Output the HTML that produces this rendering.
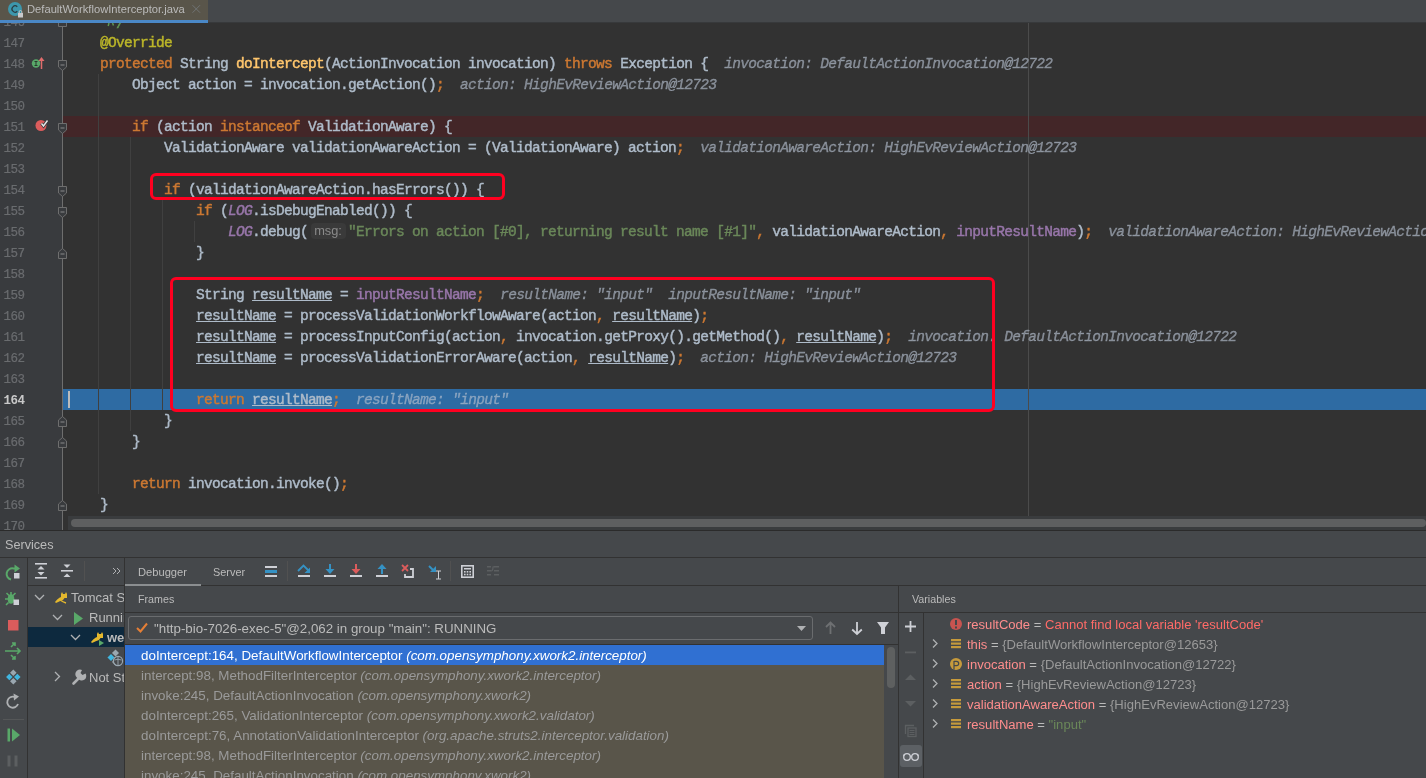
<!DOCTYPE html>
<html><head><meta charset="utf-8"><style>
*{margin:0;padding:0;box-sizing:border-box}
html,body{width:1426px;height:778px;overflow:hidden;background:#45484B;font-family:"Liberation Sans",sans-serif}
#root{position:absolute;left:0;top:0;width:1426px;height:778px;will-change:transform;overflow:hidden}
.abs{position:absolute}
#tabbar{position:absolute;left:0;top:0;width:1426px;height:23px;background:#45484B}
#tab{position:absolute;left:0;top:0;width:208px;height:20px;background:#59554A}
#tabline{position:absolute;left:0;top:20px;width:208px;height:3px;background:#4A88C7}
#editor{position:absolute;left:0;top:23px;width:1426px;height:507px;background:#323232;overflow:hidden}
#gutter{position:absolute;left:0;top:0;width:63px;height:507px;background:#393B3E}
.cl{position:absolute;left:68px;height:21px;line-height:21px;margin-top:0.6px;white-space:pre;font-family:"Liberation Mono",monospace;font-size:14.5px;letter-spacing:-0.7px;-webkit-text-stroke:0.45px;color:#AEBBC9;will-change:transform}
.ln{position:absolute;left:0;width:24.5px;text-align:right;height:21px;line-height:21px;margin-top:1.5px;font-family:"Liberation Mono",monospace;font-size:12.5px;letter-spacing:-0.5px;-webkit-text-stroke:0.2px;color:#6A6C6F;will-change:transform}
.k{color:#CC7832}.a{color:#BBB529}.m{color:#FFC66D}.s{color:#6A8759}.f{color:#9876AA}.fi{color:#9876AA;font-style:italic}
.u{text-decoration:underline;text-underline-offset:1px;text-decoration-thickness:1px}.c{color:#629755}.h{color:rgba(180,190,205,0.6);font-style:italic;-webkit-text-stroke:0.35px rgba(180,190,205,0.6)}
.ph{display:inline-block;width:35px;height:16px;line-height:16px;vertical-align:1px;margin:0 2.5px;font-family:"Liberation Sans",sans-serif;font-size:12.8px;letter-spacing:0;-webkit-text-stroke:0;color:#8A8A8A;background:#3A3A3A;border-radius:4px;text-align:center}
.ui{font-family:"Liberation Sans",sans-serif;white-space:nowrap}
.fr{position:absolute;left:16px;height:20px;line-height:20px;font-size:13.38px;color:#9A9A9A;white-space:nowrap}
.fr i{font-style:italic}
.vr{position:absolute;left:967px;height:20px;line-height:20px;margin-top:1px;font-size:13.05px;color:#BBBBBB;white-space:nowrap}
.vn{color:#FF8D8D}.vv{color:#9A9A9A}
#services{position:absolute;left:0;top:530px;width:1426px;height:248px;background:#45484B}
</style></head><body><div id="root">
<div id="editor"><div id="gutter"></div>
<div class="abs" style="left:63px;top:93px;width:1363px;height:21px;background:#432628"></div>
<div class="abs" style="left:63px;top:366px;width:1363px;height:21px;background:#2E6BA3"></div>
<div class="abs" style="left:1028px;top:0;width:1px;height:507px;background:#4B4B4B"></div>
<div class="abs" style="left:98px;top:51px;width:1px;height:420px;background:#404040"></div>
<div class="abs" style="left:130px;top:114px;width:1px;height:294px;background:#404040"></div>
<div class="abs" style="left:162px;top:177px;width:1px;height:210px;background:#404040"></div>
<div class="abs" style="left:194px;top:198px;width:1px;height:21px;background:#404040"></div>
<div class="abs" style="left:68px;top:368px;width:2px;height:17px;background:#BBBBBB"></div>
<div class="cl" style="top:-12px;margin-top:3px"><span class="d">     </span><span class="c">*/</span></div>
<div class="ln" style="top:-12px">146</div>
<div class="cl" style="top:9px"><span class="d">    </span><span class="a">@Override</span></div>
<div class="ln" style="top:9px">147</div>
<div class="cl" style="top:30px"><span class="d">    </span><span class="k">protected</span><span class="d"> String </span><span class="m">doIntercept</span><span class="d">(ActionInvocation invocation) </span><span class="k">throws</span><span class="d"> Exception {  </span><span class="h">invocation: DefaultActionInvocation@12722</span></div>
<div class="ln" style="top:30px">148</div>
<div class="cl" style="top:51px"><span class="d">        Object action = invocation.getAction()</span><span class="k">;</span><span class="d">  </span><span class="h">action: HighEvReviewAction@12723</span></div>
<div class="ln" style="top:51px">149</div>
<div class="cl" style="top:72px"></div>
<div class="ln" style="top:72px">150</div>
<div class="cl" style="top:93px"><span class="d">        </span><span class="k">if</span><span class="d"> (action </span><span class="k">instanceof</span><span class="d"> ValidationAware) {</span></div>
<div class="ln" style="top:93px">151</div>
<div class="cl" style="top:114px"><span class="d">            ValidationAware validationAwareAction = (ValidationAware) action</span><span class="k">;</span><span class="d">  </span><span class="h">validationAwareAction: HighEvReviewAction@12723</span></div>
<div class="ln" style="top:114px">152</div>
<div class="cl" style="top:135px"></div>
<div class="ln" style="top:135px">153</div>
<div class="cl" style="top:156px"><span class="d">            </span><span class="k">if</span><span class="d"> (validationAwareAction.hasErrors()) {</span></div>
<div class="ln" style="top:156px">154</div>
<div class="cl" style="top:177px"><span class="d">                </span><span class="k">if</span><span class="d"> (</span><span class="fi">LOG</span><span class="d">.isDebugEnabled()) {</span></div>
<div class="ln" style="top:177px">155</div>
<div class="cl" style="top:198px"><span class="d">                    </span><span class="fi">LOG</span><span class="d">.debug(</span><span class="ph">msg:</span><span class="s">&quot;Errors on action [#0], returning result name [#1]&quot;</span><span class="k">,</span><span class="d"> validationAwareAction</span><span class="k">,</span><span class="d"> </span><span class="f">inputResultName</span><span class="d">)</span><span class="k">;</span><span class="d">  </span><span class="h">validationAwareAction: HighEvReviewAction@12723</span></div>
<div class="ln" style="top:198px">156</div>
<div class="cl" style="top:219px"><span class="d">                }</span></div>
<div class="ln" style="top:219px">157</div>
<div class="cl" style="top:240px"></div>
<div class="ln" style="top:240px">158</div>
<div class="cl" style="top:261px"><span class="d">                String </span><span class="u">resultName</span><span class="d"> = </span><span class="f">inputResultName</span><span class="k">;</span><span class="d">  </span><span class="h">resultName: &quot;input&quot;  inputResultName: &quot;input&quot;</span></div>
<div class="ln" style="top:261px">159</div>
<div class="cl" style="top:282px"><span class="d">                </span><span class="u">resultName</span><span class="d"> = processValidationWorkflowAware(action</span><span class="k">,</span><span class="d"> </span><span class="u">resultName</span><span class="d">)</span><span class="k">;</span></div>
<div class="ln" style="top:282px">160</div>
<div class="cl" style="top:303px"><span class="d">                </span><span class="u">resultName</span><span class="d"> = processInputConfig(action</span><span class="k">,</span><span class="d"> invocation.getProxy().getMethod()</span><span class="k">,</span><span class="d"> </span><span class="u">resultName</span><span class="d">)</span><span class="k">;</span><span class="d">  </span><span class="h">invocation: DefaultActionInvocation@12722</span></div>
<div class="ln" style="top:303px">161</div>
<div class="cl" style="top:324px"><span class="d">                </span><span class="u">resultName</span><span class="d"> = processValidationErrorAware(action</span><span class="k">,</span><span class="d"> </span><span class="u">resultName</span><span class="d">)</span><span class="k">;</span><span class="d">  </span><span class="h">action: HighEvReviewAction@12723</span></div>
<div class="ln" style="top:324px">162</div>
<div class="cl" style="top:345px"></div>
<div class="ln" style="top:345px">163</div>
<div class="cl" style="top:366px"><span class="d">                </span><span class="k">return</span><span class="d"> </span><span class="u">resultName</span><span class="k">;</span><span class="d">  </span><span class="h">resultName: &quot;input&quot;</span></div>
<div class="ln" style="top:366px;color:#C8C8C8;font-weight:bold;-webkit-text-stroke:0">164</div>
<div class="cl" style="top:387px"><span class="d">            }</span></div>
<div class="ln" style="top:387px">165</div>
<div class="cl" style="top:408px"><span class="d">        }</span></div>
<div class="ln" style="top:408px">166</div>
<div class="cl" style="top:429px"></div>
<div class="ln" style="top:429px">167</div>
<div class="cl" style="top:450px"><span class="d">        </span><span class="k">return</span><span class="d"> invocation.invoke()</span><span class="k">;</span></div>
<div class="ln" style="top:450px">168</div>
<div class="cl" style="top:471px"><span class="d">    }</span></div>
<div class="ln" style="top:471px">169</div>
<div class="cl" style="top:492px"></div>
<div class="ln" style="top:492px">170</div>
<svg class="abs" style="left:107px;top:0" width="8" height="6" viewBox="0 0 8 6"><path d="M2 0 L1.2 3 M5.5 0 L6.5 2.5" stroke="#629755" stroke-width="1.5"/></svg>
<div class="abs" style="left:62px;top:0;width:1px;height:507px;background:#6E6E6E"></div>
<svg class="abs" style="left:58px;top:37.0px" width="10" height="12" viewBox="0 0 10 12"><path d="M0.5 0.5 H8.5 V7 L4.5 10.5 L0.5 7 Z" fill="#393B3E" stroke="#6E6E6E" stroke-width="1"/><rect x="2.5" y="4.5" width="4" height="1" fill="#8A8A8A"/></svg>
<svg class="abs" style="left:58px;top:100.0px" width="10" height="12" viewBox="0 0 10 12"><path d="M0.5 0.5 H8.5 V7 L4.5 10.5 L0.5 7 Z" fill="#393B3E" stroke="#6E6E6E" stroke-width="1"/><rect x="2.5" y="4.5" width="4" height="1" fill="#8A8A8A"/></svg>
<svg class="abs" style="left:58px;top:163.0px" width="10" height="12" viewBox="0 0 10 12"><path d="M0.5 0.5 H8.5 V7 L4.5 10.5 L0.5 7 Z" fill="#393B3E" stroke="#6E6E6E" stroke-width="1"/><rect x="2.5" y="4.5" width="4" height="1" fill="#8A8A8A"/></svg>
<svg class="abs" style="left:58px;top:184.0px" width="10" height="12" viewBox="0 0 10 12"><path d="M0.5 0.5 H8.5 V7 L4.5 10.5 L0.5 7 Z" fill="#393B3E" stroke="#6E6E6E" stroke-width="1"/><rect x="2.5" y="4.5" width="4" height="1" fill="#8A8A8A"/></svg>
<svg class="abs" style="left:58px;top:-7.5px" width="10" height="12" viewBox="0 0 10 12"><path d="M0.5 10.5 H8.5 V4 L4.5 0.5 L0.5 4 Z" fill="#393B3E" stroke="#6E6E6E" stroke-width="1"/><rect x="2.5" y="5.5" width="4" height="1" fill="#8A8A8A"/></svg>
<svg class="abs" style="left:58px;top:224.5px" width="10" height="12" viewBox="0 0 10 12"><path d="M0.5 10.5 H8.5 V4 L4.5 0.5 L0.5 4 Z" fill="#393B3E" stroke="#6E6E6E" stroke-width="1"/><rect x="2.5" y="5.5" width="4" height="1" fill="#8A8A8A"/></svg>
<svg class="abs" style="left:58px;top:392.5px" width="10" height="12" viewBox="0 0 10 12"><path d="M0.5 10.5 H8.5 V4 L4.5 0.5 L0.5 4 Z" fill="#393B3E" stroke="#6E6E6E" stroke-width="1"/><rect x="2.5" y="5.5" width="4" height="1" fill="#8A8A8A"/></svg>
<svg class="abs" style="left:58px;top:413.5px" width="10" height="12" viewBox="0 0 10 12"><path d="M0.5 10.5 H8.5 V4 L4.5 0.5 L0.5 4 Z" fill="#393B3E" stroke="#6E6E6E" stroke-width="1"/><rect x="2.5" y="5.5" width="4" height="1" fill="#8A8A8A"/></svg>
<svg class="abs" style="left:58px;top:476.5px" width="10" height="12" viewBox="0 0 10 12"><path d="M0.5 10.5 H8.5 V4 L4.5 0.5 L0.5 4 Z" fill="#393B3E" stroke="#6E6E6E" stroke-width="1"/><rect x="2.5" y="5.5" width="4" height="1" fill="#8A8A8A"/></svg>
<svg class="abs" style="left:30px;top:32px" width="16" height="16" viewBox="0 0 16 16"><circle cx="6" cy="8.5" r="4.2" fill="#59A869"/><path d="M4.5 6.5 H7.5 M6 6.5 V10.5 M4.5 10.5 H7.5" stroke="#2B3A2E" stroke-width="1"/><path d="M11.5 14 V4" stroke="#E06C6C" stroke-width="1.5"/><path d="M8.5 6 L11.5 2 L14.5 6 Z" fill="#E06C6C"/></svg>
<svg class="abs" style="left:33px;top:93px" width="16" height="16" viewBox="0 0 16 16"><circle cx="8" cy="9.5" r="5.5" fill="#DB5C5C"/><path d="M8.5 7.5 L10.5 10 L14.5 4.5" fill="none" stroke="#393B3E" stroke-width="3"/><path d="M8.5 7.5 L10.5 10 L14.5 4.5" fill="none" stroke="#E8E8E8" stroke-width="1.4"/></svg>
<div class="abs" style="left:68px;top:493px;width:1358px;height:14px;background:#3A3C3E"></div>
<div class="abs" style="left:71px;top:496px;width:1355px;height:8px;border-radius:4px;background:#5E5F60"></div>
</div>
<div id="tabbar"><div id="tab"></div><div id="tabline"></div>
<div class="abs ui" style="left:27px;top:3px;font-size:11.2px;color:#BBBBBB">DefaultWorkflowInterceptor.java</div>
<svg class="abs" style="left:6px;top:1px" width="20" height="19" viewBox="0 0 20 19"><circle cx="9" cy="8" r="7" fill="#3D97AC"/><path d="M11.3 5.8 A3.1 3.1 0 1 0 11.3 10.2" fill="none" stroke="#2A3A40" stroke-width="1.2"/><rect x="12" y="12" width="5" height="4.5" fill="#C8C9CB"/><path d="M13.2 12 V10.8 A1.3 1.3 0 0 1 15.8 10.8 V12" fill="none" stroke="#C8C9CB" stroke-width="1"/></svg>
<svg class="abs" style="left:191px;top:4px" width="11" height="11" viewBox="0 0 11 11"><path d="M1.5 1.2 L9 8.7 M9 1.2 L1.5 8.7" stroke="#727678" stroke-width="0.9"/></svg>
<div class="abs" style="left:208px;top:22px;width:1218px;height:1px;background:#37393B"></div>
</div>
<div id="services">
<!-- borders -->
<div class="abs" style="left:0;top:0;width:1426px;height:1px;background:#2B2B2B"></div>
<div class="abs" style="left:0;top:27px;width:1426px;height:1px;background:#323232"></div>
<div class="abs" style="left:27px;top:28px;width:1px;height:220px;background:#323232"></div>
<div class="abs" style="left:28px;top:55px;width:96px;height:1px;background:#323232"></div>
<div class="abs" style="left:124px;top:28px;width:1px;height:220px;background:#323232"></div>
<div class="abs" style="left:125px;top:55px;width:1301px;height:1px;background:#323232"></div>
<div class="abs" style="left:125px;top:82px;width:1301px;height:1px;background:#323232"></div>
<div class="abs" style="left:898px;top:56px;width:1px;height:192px;background:#323232"></div>
<div class="abs" style="left:923px;top:83px;width:1px;height:165px;background:#323232"></div>
<div class="abs" style="left:125px;top:114px;width:773px;height:1px;background:#323232"></div>

<div class="abs ui" style="left:5px;top:7.5px;font-size:12.65px;color:#BBBBBB">Services</div>

<!-- left toolbar icons -->
<svg class="abs" style="left:0;top:28px" width="27" height="220" viewBox="0 0 27 220">
  <!-- restart: center 13,15 -->
  <path d="M11 21.5 A5.5 5.5 0 1 1 13.5 10.5 L15 10.5" fill="none" stroke="#59A869" stroke-width="2"/>
  <path d="M14.5 6.5 L20 10.5 L14.5 14.5 Z" fill="#59A869"/>
  <rect x="14" y="15" width="5.5" height="5.5" fill="#CED0D6"/>
  <!-- debug bug: center 41 -->
  <g>
   <ellipse cx="11" cy="41" rx="3.3" ry="4.8" fill="#59A869"/>
   <path d="M6.5 35 L9 37.5 M15.5 35 L13 37.5 M5 41 L8 41 M6 47 L8.5 44.5 M11 34 L11 37" stroke="#59A869" stroke-width="1.6"/>
   <rect x="13.5" y="41.5" width="5.5" height="5.5" fill="#CED0D6"/>
  </g>
  <!-- stop: 62-72 -->
  <rect x="8" y="62" width="10.5" height="10.5" fill="#DB5C5C"/>
  <!-- green arrows: center 92.5 -->
  <g fill="none" stroke="#59A869" stroke-width="1.6">
   <path d="M5 93 L20 93 M17 90 L20 93 L17 96"/>
   <path d="M11 89 L15 85 M12 85 L15 85 L15 88"/>
   <path d="M11 97 L15 101 M12 101 L15 101 L15 98"/>
  </g>
  <!-- diamonds: center 119 -->
  <g>
   <rect x="11" y="112.5" width="4.6" height="4.6" fill="#9AA7B0" transform="rotate(45 13.3 114.8)"/>
   <rect x="7" y="116.7" width="4.6" height="4.6" fill="#40B6E0" transform="rotate(45 9.3 119)"/>
   <rect x="15" y="116.7" width="4.6" height="4.6" fill="#40B6E0" transform="rotate(45 17.3 119)"/>
   <rect x="11" y="120.9" width="4.6" height="4.6" fill="#9AA7B0" transform="rotate(45 13.3 123.2)"/>
  </g>
  <!-- refresh: center 144 -->
  <path d="M18 146 A5.5 5.5 0 1 1 14.5 139" fill="none" stroke="#AFB1B3" stroke-width="1.8"/>
  <path d="M13.5 135.5 L19 138.5 L14 142.5 Z" fill="#AFB1B3"/>
  <!-- separator 161 -->
  <rect x="3" y="161" width="21" height="1" fill="#555758"/>
  <!-- resume center 177 -->
  <rect x="7.5" y="170.5" width="2.5" height="13" fill="#59A869"/>
  <path d="M12 170.5 L20 177 L12 183.5 Z" fill="#59A869"/>
  <!-- pause center 203 -->
  <rect x="7.5" y="197.5" width="3" height="11" fill="#5C5F61"/>
  <rect x="14.5" y="197.5" width="3" height="11" fill="#5C5F61"/>
</svg>

<!-- tree toolbar -->
<svg class="abs" style="left:28px;top:28px" width="96" height="27" viewBox="0 0 96 27">
  <g fill="#CED0D6">
   <rect x="7" y="5" width="12" height="1.6"/><rect x="7" y="19" width="12" height="1.6"/>
   <path d="M13 8 L16.5 11.5 L9.5 11.5 Z"/><path d="M13 17.5 L16.5 14 L9.5 14 Z"/>
   <rect x="33" y="12" width="12" height="1.6"/>
   <path d="M39 10 L35.5 6.5 L42.5 6.5 Z"/><path d="M39 15.6 L35.5 19.1 L42.5 19.1 Z"/>
  </g>
  <rect x="56" y="3" width="1" height="20" fill="#515151"/>
  <path d="M85 10 L88 13 L85 16 M89 10 L92 13 L89 16" fill="none" stroke="#AFB1B3" stroke-width="1"/>
</svg>

<!-- tree -->
<div class="abs" style="left:28px;top:97px;width:96px;height:20px;background:#0D293E"></div>
<div class="abs" style="left:28px;top:56px;width:96px;height:192px;overflow:hidden">
 <svg class="abs" style="left:0;top:0" width="96" height="192" viewBox="0 0 96 192">
  <g fill="none" stroke="#AFB1B3" stroke-width="1.3">
   <path d="M7 9 L11.5 13.5 L16 9"/>
   <path d="M25 29 L29.5 33.5 L34 29"/>
   <path d="M43 49 L47.5 53.5 L52 49"/>
   <path d="M27 86 L31.5 90.5 L27 95"/>
  </g>
  <!-- tomcat -->
  <g transform="translate(26,6)">
   <path d="M1 10 Q5 4 12 4 L9 8 Q6 9 2 11 Z" fill="#E4B82E"/>
   <path d="M7 2 L8 0 L9 2 L11 2 L12 0 L13 2 L13 6 L7 6 Z" fill="#E4B82E"/>
   <path d="M6 8 Q9 10 12 11" fill="none" stroke="#E4B82E" stroke-width="1.4"/>
  </g>
  <path d="M46 26 L55 32.5 L46 39 Z" fill="#59A869"/>
  <g transform="translate(62,46)">
   <path d="M1 10 Q5 4 12 4 L9 8 Q6 9 2 11 Z" fill="#E4B82E"/>
   <path d="M7 2 L8 0 L9 2 L11 2 L12 0 L13 2 L13 6 L7 6 Z" fill="#E4B82E"/>
   <path d="M9 8 L14 11 L9 14 Z" fill="#59A869"/>
  </g>
  <!-- artifact icon -->
  <g transform="translate(79,64)">
   <rect x="6" y="0.5" width="5" height="5" fill="#9AA7B0" transform="rotate(45 8.5 3)"/>
   <rect x="1.5" y="5" width="5" height="5" fill="#40B6E0" transform="rotate(45 4 7.5)"/>
   <rect x="6" y="9.5" width="5" height="5" fill="#9AA7B0" transform="rotate(45 8.5 12)"/>
   <circle cx="11" cy="11" r="4.6" fill="#45484B" stroke="#9AA7B0" stroke-width="1.2"/>
   <path d="M7.5 10 Q11 8.5 14.5 10 M11 6.5 V15.5" fill="none" stroke="#9AA7B0" stroke-width="0.9"/>
  </g>
  <!-- wrench -->
  <path d="M45.5 97.5 L51.5 91.5" stroke="#AFB1B3" stroke-width="2.6" stroke-linecap="round"/><path d="M50 92.5 A4.5 4.5 0 0 1 54 84 L52.5 87 L54.5 89 L57.5 87.5 A4.5 4.5 0 0 1 50 92.5 Z" fill="#AFB1B3"/>
 </svg>
 <div class="abs ui" style="left:43px;top:3.5px;font-size:13px;color:#BBBBBB;white-space:nowrap">Tomcat Server</div>
 <div class="abs ui" style="left:61px;top:23.5px;font-size:13px;color:#BBBBBB;white-space:nowrap">Running</div>
 <div class="abs ui" style="left:79px;top:43.5px;font-size:13px;color:#BBBBBB;font-weight:bold;white-space:nowrap">webapp</div>
 <div class="abs ui" style="left:61px;top:83.5px;font-size:13px;color:#BBBBBB;white-space:nowrap">Not Started</div>
</div>

<!-- debugger tabs -->
<div class="abs" style="left:125px;top:54px;width:76px;height:2px;background:#8B8E90"></div>
<div class="abs ui" style="left:138px;top:36px;font-size:11.15px;color:#BBBBBB">Debugger</div>
<div class="abs ui" style="left:213px;top:36px;font-size:10.9px;color:#BBBBBB">Server</div>
<svg class="abs" style="left:255px;top:28px" width="260" height="27" viewBox="0 0 260 27">
  <rect x="10" y="8" width="12" height="2" fill="#CED0D6"/>
  <rect x="10" y="12" width="12" height="3" fill="#3592C4"/>
  <rect x="10" y="17" width="12" height="2" fill="#CED0D6"/>
  <rect x="32" y="3" width="1" height="20" fill="#515151"/>
  <!-- step over -->
  <path d="M43 13 L48.5 7.5 L54 13" fill="none" stroke="#3592C4" stroke-width="1.8"/>
  <path d="M49.5 15 L55 15 L55 9.5 Z" fill="#3592C4"/>
  <rect x="43" y="17" width="12" height="2" fill="#CED0D6"/>
  <!-- step into -->
  <rect x="74" y="6" width="2" height="6" fill="#3592C4"/><path d="M70.5 11 L79.5 11 L75 16 Z" fill="#3592C4"/>
  <rect x="69" y="17" width="12" height="2" fill="#CED0D6"/>
  <!-- force step into -->
  <rect x="100" y="6" width="2" height="6" fill="#DB5C5C"/><path d="M96.5 11 L105.5 11 L101 16 Z" fill="#DB5C5C"/>
  <rect x="95" y="17" width="12" height="2" fill="#CED0D6"/>
  <!-- step out -->
  <rect x="126" y="10" width="2" height="6" fill="#3592C4"/><path d="M122.5 11 L131.5 11 L127 6 Z" fill="#3592C4"/>
  <rect x="121" y="17" width="12" height="2" fill="#CED0D6"/>
  <!-- drop frame -->
  <path d="M147 7 L153 13 M153 7 L147 13" stroke="#DB5C5C" stroke-width="1.8"/>
  <path d="M155 11 L158 11 L158 19 L150 19 L150 16" fill="none" stroke="#CED0D6" stroke-width="1.8"/>
  <!-- run to cursor -->
  <path d="M174 8 L179 13" stroke="#3592C4" stroke-width="2"/><path d="M175 14 L181 14 L181 8 Z" fill="#3592C4"/>
  <path d="M181 13 L186 13 M183.5 13 L183.5 21 M181 21 L186 21" stroke="#CED0D6" stroke-width="1"/>
  <rect x="195" y="3" width="1" height="20" fill="#515151"/>
  <!-- evaluate -->
  <rect x="206.8" y="7.8" width="11.4" height="11.4" fill="none" stroke="#CED0D6" stroke-width="1.6"/>
  <rect x="209" y="10" width="7" height="1.5" fill="#CED0D6"/>
  <g fill="#CED0D6"><rect x="209" y="13" width="1.6" height="1.6"/><rect x="211.7" y="13" width="1.6" height="1.6"/><rect x="214.4" y="13" width="1.6" height="1.6"/><rect x="209" y="15.7" width="1.6" height="1.6"/><rect x="211.7" y="15.7" width="1.6" height="1.6"/><rect x="214.4" y="15.7" width="1.6" height="1.6"/></g>
  <!-- trace disabled -->
  <g fill="#5C5F61"><rect x="232" y="8" width="4" height="1.5"/><rect x="232" y="12" width="4" height="1.5"/><rect x="232" y="16" width="4" height="1.5"/><rect x="239" y="8" width="5" height="1.5"/><rect x="239" y="12" width="5" height="1.5"/><rect x="239" y="16" width="5" height="1.5"/></g>
  <path d="M236 13 Q238 13 238 9 L240 8.5" fill="none" stroke="#5C5F61" stroke-width="1.2"/>
</svg>

<div class="abs ui" style="left:138px;top:63px;font-size:10.7px;color:#BBBBBB">Frames</div>
<div class="abs ui" style="left:912px;top:63px;font-size:10.7px;color:#BBBBBB">Variables</div>

<!-- frames dropdown -->
<div class="abs" style="left:128px;top:86px;width:685px;height:23.5px;background:#45484B;border:1px solid #6A6C6E;border-radius:3px"></div>
<svg class="abs" style="left:128px;top:86px" width="770" height="24" viewBox="0 0 770 24">
  <path d="M9 12 L12.5 15.5 L19 7.5" fill="none" stroke="#E57F36" stroke-width="2"/>
  <path d="M669 10 L678 10 L673.5 15 Z" fill="#AFB1B3"/>
  <path d="M702.5 6.5 L702.5 18 M698 11 L702.5 6.5 L707 11" fill="none" stroke="#6E7072" stroke-width="1.8"/>
  <path d="M729 6 L729 18 M724.2 13.5 L729 18 L733.8 13.5" fill="none" stroke="#CED0D6" stroke-width="1.8"/>
  <path d="M749 6 L761 6 L757 11.5 L757 18 L753 18 L753 11.5 Z" fill="#CED0D6"/>
</svg>
<div class="abs ui" style="left:154px;top:91px;font-size:13.32px;color:#BBBBBB;white-space:nowrap">"http-bio-7026-exec-5"@2,062 in group "main": RUNNING</div>

<!-- frames list -->
<div class="abs" style="left:125px;top:115px;width:759px;height:133px;background:#59554A"></div>
<div class="abs" style="left:125px;top:115px;width:759px;height:20px;background:#3070D2"></div>
<div class="abs" style="left:884px;top:115px;width:14px;height:133px;background:#45484B"></div>
<div class="abs" style="left:887px;top:117px;width:8px;height:41px;background:#5E6060;border-radius:4px"></div>
<div class="abs" style="left:125px;top:116px;width:759px;height:132px;overflow:hidden">
 <div class="fr" style="top:0;color:#FFFFFF">doIntercept:164, DefaultWorkflowInterceptor <i>(com.opensymphony.xwork2.interceptor)</i></div>
 <div class="fr" style="top:20px">intercept:98, MethodFilterInterceptor <i>(com.opensymphony.xwork2.interceptor)</i></div>
 <div class="fr" style="top:40px">invoke:245, DefaultActionInvocation <i>(com.opensymphony.xwork2)</i></div>
 <div class="fr" style="top:60px">doIntercept:265, ValidationInterceptor <i>(com.opensymphony.xwork2.validator)</i></div>
 <div class="fr" style="top:80px">doIntercept:76, AnnotationValidationInterceptor <i>(org.apache.struts2.interceptor.validation)</i></div>
 <div class="fr" style="top:100px">intercept:98, MethodFilterInterceptor <i>(com.opensymphony.xwork2.interceptor)</i></div>
 <div class="fr" style="top:120px">invoke:245, DefaultActionInvocation <i>(com.opensymphony.xwork2)</i></div>
</div>

<!-- variables toolbar -->
<svg class="abs" style="left:899px;top:83px" width="24" height="165" viewBox="0 0 24 165">
  <path d="M11.5 8 L11.5 19 M6 13.5 L17 13.5" stroke="#CED0D6" stroke-width="1.8"/>
  <rect x="6" y="38.5" width="11" height="1.8" fill="#5C5F61"/>
  <path d="M6 67 L11.5 61.5 L17 67 Z" fill="#5C5F61"/>
  <path d="M6 118 L11.5 123.5 L17 118 Z" fill="#5C5F61" transform="translate(0,-30)"/>
  <g fill="none" stroke="#5C5F61" stroke-width="1.3"><path d="M6.5 121 L6.5 112.5 L15 112.5"/><rect x="9" y="115" width="8" height="8.5"/></g><g fill="#5C5F61"><rect x="10.5" y="117" width="5" height="1"/><rect x="10.5" y="119" width="5" height="1"/><rect x="10.5" y="121" width="5" height="1"/></g>
  
</svg>
<div class="abs" style="left:900px;top:215px;width:22px;height:22px;border-radius:3px;background:#5C6064"></div>
<svg class="abs" style="left:900px;top:215px" width="22" height="22" viewBox="0 0 22 22">
  <circle cx="7" cy="12" r="3.3" fill="none" stroke="#CED0D6" stroke-width="1.3"/>
  <circle cx="15" cy="12" r="3.3" fill="none" stroke="#CED0D6" stroke-width="1.3"/>
  <path d="M10.3 11.5 Q11 10.8 11.7 11.5" fill="none" stroke="#CED0D6" stroke-width="1.2"/>
  <path d="M3.7 11 L4.5 9 M18.3 11 L17.5 9" stroke="#CED0D6" stroke-width="1.2"/>
</svg>

<!-- variables tree -->
<svg class="abs" style="left:924px;top:84px" width="60" height="134" viewBox="0 0 60 134">
  <circle cx="32" cy="10" r="6" fill="#C75450"/>
  <rect x="31" y="6" width="2" height="5" fill="#45484B"/><rect x="31" y="12.5" width="2" height="2" fill="#45484B"/>
  <g fill="none" stroke="#AFB1B3" stroke-width="1.3">
   <path d="M9 25.5 L13 29.5 L9 33.5"/><path d="M9 45.5 L13 49.5 L9 53.5"/><path d="M9 65.5 L13 69.5 L9 73.5"/><path d="M9 85.5 L13 89.5 L9 93.5"/><path d="M9 105.5 L13 109.5 L9 113.5"/>
  </g>
  <g fill="#C69A3C">
   <rect x="27" y="25" width="10" height="2.2"/><rect x="27" y="28.5" width="10" height="2.2"/><rect x="27" y="32" width="10" height="2.2"/>
   <circle cx="32" cy="50" r="6"/>
   <rect x="27" y="65" width="10" height="2.2"/><rect x="27" y="68.5" width="10" height="2.2"/><rect x="27" y="72" width="10" height="2.2"/>
   <rect x="27" y="85" width="10" height="2.2"/><rect x="27" y="88.5" width="10" height="2.2"/><rect x="27" y="92" width="10" height="2.2"/>
   <rect x="27" y="105" width="10" height="2.2"/><rect x="27" y="108.5" width="10" height="2.2"/><rect x="27" y="112" width="10" height="2.2"/>
  </g>
  <path d="M30 47 V55.5 M30 47.3 H32.5 A2.2 2.2 0 0 1 32.5 51.7 H30" fill="none" stroke="#45484B" stroke-width="1.2"/>
</svg>
<div class="vr" style="top:84px"><span class="vn">resultCode</span> = <span style="color:#FF6B68">Cannot find local variable 'resultCode'</span></div>
<div class="vr" style="top:104px"><span class="vn">this</span> = <span class="vv">{DefaultWorkflowInterceptor@12653}</span></div>
<div class="vr" style="top:124px"><span class="vn">invocation</span> = <span class="vv">{DefaultActionInvocation@12722}</span></div>
<div class="vr" style="top:144px"><span class="vn">action</span> = <span class="vv">{HighEvReviewAction@12723}</span></div>
<div class="vr" style="top:164px"><span class="vn">validationAwareAction</span> = <span class="vv">{HighEvReviewAction@12723}</span></div>
<div class="vr" style="top:184px"><span class="vn">resultName</span> = <span style="color:#6A8759">"input"</span></div>
</div>

<!-- red annotation boxes -->
<div class="abs" style="left:150px;top:172.5px;width:354.5px;height:27px;border:3.5px solid #FF0020;border-radius:6px"></div>
<div class="abs" style="left:170px;top:276.5px;width:825px;height:135.5px;border:3.5px solid #FF0020;border-radius:6px"></div>

</div></body></html>
